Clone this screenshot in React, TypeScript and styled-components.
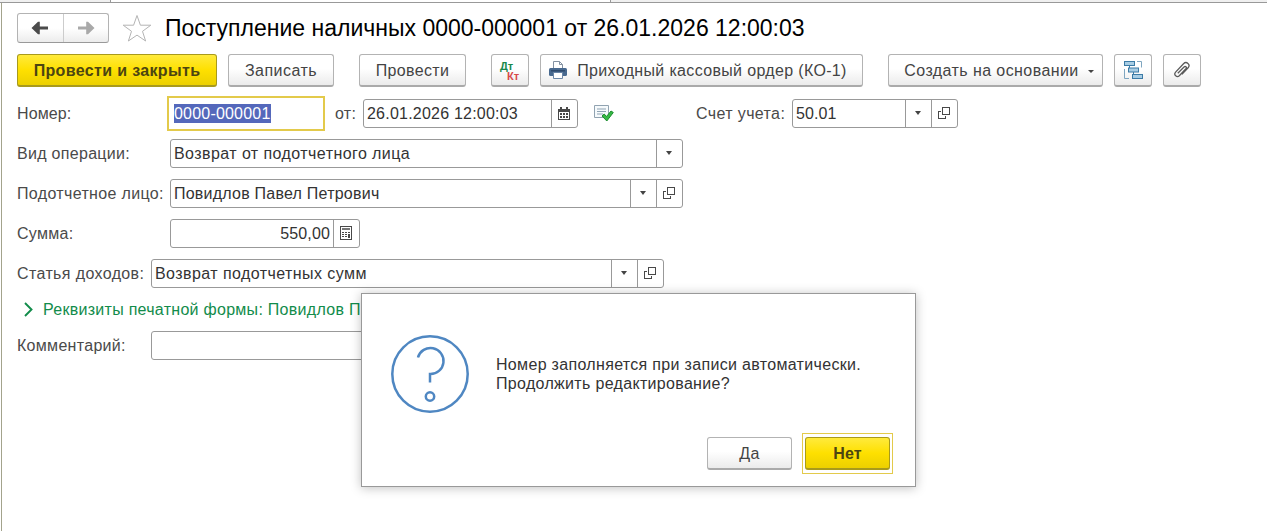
import React from 'react';
import styled, { createGlobalStyle, css } from 'styled-components';

export default function App() {
  return (
    <>
      <GlobalStyle />
      <TabStrip>
        <TabRest $width={110} />
        <ActiveTab />
        <TabRest />
      </TabStrip>
      <Page>
        <Header>
          <NavGroup>
            <NavButton>
              <ArrowIcon color="#4b4b4b" />
            </NavButton>
            <NavButton>
              <ArrowIcon color="#a9a9a9" flip />
            </NavButton>
          </NavGroup>
          <StarIcon />
          <Title>Поступление наличных 0000-000001 от 26.01.2026 12:00:03</Title>
        </Header>

        <Toolbar>
          <Button $width={200} $primary $spacing={0.35}>Провести и закрыть</Button>
          <Button $width={106} $ml={11} $spacing={0.45}>Записать</Button>
          <Button $width={107} $ml={25} $spacing={0.35}>Провести</Button>
          <Button $width={38} $ml={25}>
            <Posting>
              <Debit>Дт</Debit>
              <Credit>Кт</Credit>
            </Posting>
          </Button>
          <Button $width={323} $ml={11} $spacing={0.34}>
            <PrinterIcon />
            Приходный кассовый ордер (КО-1)
          </Button>
          <Button $width={215} $ml={25} $spacing={0.42}>
            Создать на основании
            <SmallCaret />
          </Button>
          <Button $width={38} $ml={11}>
            <StructureIcon />
          </Button>
          <Button $width={38} $ml={11}>
            <ClipIcon />
          </Button>
        </Toolbar>

        <Form>
          <Row>
            <Label $width={150} $spacing={0.1}>Номер:</Label>
            <FocusedField>
              <Selection>0000-000001</Selection>
            </FocusedField>
            <Label $width={28} $ml={10}>от:</Label>
            <Field $width={215}>
              <Value $spacing={0.22}>26.01.2026 12:00:03</Value>
              <FieldButton>
                <CalendarIcon />
              </FieldButton>
            </Field>
            <PostedMark>
              <PostedIcon />
            </PostedMark>
            <Label $width={96} $spacing={0.38}>Счет учета:</Label>
            <Field $width={166}>
              <Value $spacing={0.1}>50.01</Value>
              <FieldButton>
                <Caret />
              </FieldButton>
              <FieldButton>
                <OpenIcon />
              </FieldButton>
            </Field>
          </Row>
          <Row>
            <Label $width={153}>Вид операции:</Label>
            <Field $width={513}>
              <Value $spacing={0.43}>Возврат от подотчетного лица</Value>
              <FieldButton>
                <Caret />
              </FieldButton>
            </Field>
          </Row>
          <Row>
            <Label $width={153} $spacing={0.35}>Подотчетное лицо:</Label>
            <Field $width={513}>
              <Value $spacing={0.23}>Повидлов Павел Петрович</Value>
              <FieldButton>
                <Caret />
              </FieldButton>
              <FieldButton>
                <OpenIcon />
              </FieldButton>
            </Field>
          </Row>
          <Row>
            <Label $width={153}>Сумма:</Label>
            <Field $width={190}>
              <Value $right $spacing={0.15}>550,00</Value>
              <FieldButton>
                <CalculatorIcon />
              </FieldButton>
            </Field>
          </Row>
          <Row>
            <Label $width={134} $spacing={0.38}>Статья доходов:</Label>
            <Field $width={513}>
              <Value $spacing={0.43}>Возврат подотчетных сумм</Value>
              <FieldButton>
                <Caret />
              </FieldButton>
              <FieldButton>
                <OpenIcon />
              </FieldButton>
            </Field>
          </Row>
          <DetailsLink>
            <ChevronIcon />
            Реквизиты печатной формы: Повидлов П
          </DetailsLink>
          <Row>
            <Label $width={134}>Комментарий:</Label>
            <Field $width={513} />
          </Row>
        </Form>
      </Page>

      <Dialog>
        <Message>
          <QuestionIcon />
          <MessageText>
            Номер заполняется при записи автоматически.
            <br />
            Продолжить редактирование?
          </MessageText>
        </Message>
        <Actions>
          <Button $width={85} $spacing={0.3}>Да</Button>
          <FocusRing>
            <Button $width={85} $primary $spacing={0.2}>Нет</Button>
          </FocusRing>
        </Actions>
      </Dialog>
    </>
  );
}

const ArrowIcon = ({ color, flip = false }: { color: string; flip?: boolean }) => (
  <svg width="18" height="14" viewBox="0 0 18 14" transform={flip ? 'scale(-1 1)' : undefined}>
    <path d="M.5 7 7 .8h1.800v4.700H17v3H8.800v4.700H7Z" fill={color} />
  </svg>
);

const StarIcon = () => (
  <Star width="30" height="29" viewBox="0 0 30 29">
    <path
      d="M15 1.500 18.400 11.200H28.800L20.500 17.300 23.600 27 15 21.100 6.400 27 9.500 17.300 1.200 11.200H11.600Z"
      fill="#fff"
      stroke="#b4b4b4"
    />
  </Star>
);

const PrinterIcon = () => (
  <Printer width="18" height="19" viewBox="0 0 18 19">
    <path d="M4.500 8V.5h6l3 3V8" fill="#fff" stroke="#8492a3" />
    <path d="M10.500.5v3h3" fill="none" stroke="#8492a3" />
    <rect x="0" y="7" width="18" height="8" rx="1.500" fill="#48698f" />
    <rect x="2" y="9" width="14" height="1.500" fill="#2f4b6e" />
    <path d="M4.500 11.500h9v6h-9z" fill="#fff" stroke="#6b86a6" />
  </Printer>
);

const StructureIcon = () => (
  <svg width="19" height="19" viewBox="0 0 19 19">
    <path d="M13 .5h4.500v6M.5 8v9.500H5" fill="none" stroke="#7fa6c0" />
    <path d="M5.500 4v5h3M9.500 10v6" fill="none" stroke="#3c7ba6" />
    <g fill="#a8cde4" stroke="#3c7ba6">
      <rect x=".5" y=".5" width="10" height="4" />
      <rect x="4.500" y="7" width="10" height="4" />
      <rect x="8.500" y="13.500" width="10" height="4" />
    </g>
  </svg>
);

const ClipIcon = () => (
  <svg width="18" height="18" viewBox="0 0 18 18">
    <path
      d="M5.300 12.600 11.500 6.300c1.400-1.300 3.200.3 1.900 1.800l-6.600 6.900c-2.300 2.200-6.100-.8-3.700-3.600L11 3c2.900-2.800 7.400.6 4.600 4.100l-6.200 6.600"
      transform="translate(-.5 -.3)"
      fill="none"
      stroke="#5a5a5a"
      strokeWidth="1.300"
    />
  </svg>
);

const CalendarIcon = () => (
  <svg width="12" height="13" viewBox="0 0 12 13" shapeRendering="crispEdges">
    <path d="M0 2h12v11H0z" fill="#484848" />
    <path d="M2 0h2v3H2zM8 0h2v3H8z" fill="#484848" />
    <path d="M1 5h10v7H1z" fill="#fff" />
    <path d="M2 6h2v2H2zM5 6h2v2H5zM8 6h2v2H8zM2 9h2v2H2zM5 9h2v2H5zM8 9h2v2H8z" fill="#484848" />
  </svg>
);

const CalculatorIcon = () => (
  <svg width="12" height="14" viewBox="0 0 12 14" shapeRendering="crispEdges">
    <path d="M.5.5h11v13H.5z" fill="#fff" stroke="#484848" />
    <path d="M2 2h8v2H2z" fill="#777" />
    <path d="M2 6h2v1H2zM5 6h2v1H5zM8 6h2v1H8zM2 8h2v1H2zM5 8h2v1H5zM2 10h2v1H2zM5 10h2v1H5zM8 8h2v4H8z" fill="#484848" />
  </svg>
);

const OpenIcon = () => (
  <svg width="12" height="12" viewBox="0 0 12 12" shapeRendering="crispEdges">
    <path d="M4.500.5h7v7h-7zM3 4.500H.5v7h7V9" fill="none" stroke="#484848" />
  </svg>
);

const PostedIcon = () => (
  <svg width="20" height="17" viewBox="0 0 20 17">
    <path d="M.5.5h14v12H.5z" fill="#f6fafc" stroke="#91a3b1" />
    <path d="M3 4h9M3 6.500h9M3 9h6" stroke="#8fa3b3" />
    <path d="m8 11 2.200-2 2.300 2.500L17 6l2.300 1.500-6.500 8.500Z" fill="#35b944" stroke="#1d8c2f" />
  </svg>
);

const ChevronIcon = () => (
  <svg width="9" height="15" viewBox="0 0 9 15">
    <path d="m1 1 6.500 6.500L1 14" fill="none" stroke="#128c4b" strokeWidth="1.900" />
  </svg>
);

const QuestionIcon = () => (
  <svg width="78" height="78" viewBox="0 0 78 78" fill="none" stroke="#4f87c2" strokeWidth="2.500">
    <circle cx="39" cy="39" r="37.700" />
    <path d="M27 22.500A13 13 0 1 1 39 39v8.500" />
    <circle cx="39" cy="61.500" r="4.200" />
  </svg>
);

const GlobalStyle = createGlobalStyle`
  body {
    margin: 0;
    background: #fff;
    color: #333;
    font: 16px/19px 'Liberation Sans', Arial, sans-serif;
    overflow: hidden;
  }

  * {
    box-sizing: border-box;
  }
`;

const TabStrip = styled.div`
  display: flex;
  height: 3px;
  border-bottom: 1px solid #999;
`;

const TabRest = styled.div<{ $width?: number }>`
  ${(p) => (p.$width ? `width: ${p.$width}px;` : 'flex: 1;')}
  background: #f0f0f0;
`;

const ActiveTab = styled.div`
  width: 501px;
  border: solid #999;
  border-width: 0 1px;
`;

const Page = styled.main`
  height: 528px;
  margin-left: 1px;
  padding: 10px 0 0 15px;
  border-left: 1px solid #a3a38c;
`;

const Header = styled.header`
  display: flex;
  height: 31px;
`;

const NavGroup = styled.div`
  display: flex;
  width: 92px;
  height: 30px;
  border: 1px solid #b3b3b3;
  border-bottom-color: #999;
  border-radius: 3px;
  background: linear-gradient(#fff 50%, #ececec);
`;

const NavButton = styled.div`
  flex: 1;
  display: flex;
  align-items: center;
  justify-content: center;

  & + & {
    border-left: 1px solid #ccc;
  }
`;

const Star = styled.svg`
  margin: 1px 0 0 13px;
`;

const Title = styled.h1`
  margin: 0 0 0 13px;
  color: #000;
  font-size: 23px;
  line-height: 30px;
  font-weight: 400;
  white-space: nowrap;
`;

const Toolbar = styled.div`
  display: flex;
  margin-top: 10px;
`;

const Button = styled.div<{ $width: number; $ml?: number; $primary?: boolean; $spacing?: number }>`
  display: flex;
  flex: none;
  align-items: center;
  justify-content: center;
  width: ${(p) => p.$width}px;
  height: 33px;
  margin-left: ${(p) => p.$ml || 0}px;
  border: 1px solid #b3b3b3;
  border-bottom: 2px solid #aaa;
  border-radius: 3px;
  background: linear-gradient(#fff 45%, #ebebeb);
  color: #444;
  letter-spacing: ${(p) => p.$spacing || 0}px;
  white-space: nowrap;

  ${(p) =>
    p.$primary &&
    css`
      border-color: #a89a1c;
      background: linear-gradient(#ffea3c, #fee000 50%, #ecd000);
      color: #4b4512;
      font-weight: 700;
    `}
`;

const Posting = styled.div`
  display: flex;
  flex-direction: column;
  width: 20px;
  margin-top: 2px;
  font: 700 11px/10px 'Liberation Sans', Arial, sans-serif;
`;

const Debit = styled.span`
  color: #18884b;
`;

const Credit = styled.span`
  padding-left: 7px;
  color: #d84a4a;
`;

const Printer = styled.svg`
  margin: 0 10px 0 -7px;
`;

const Caret = styled.i`
  border: solid transparent;
  border-width: 4px 3.5px 0;
  border-top-color: #444;
`;

const SmallCaret = styled(Caret)`
  margin: 2px -7px 0 9px;
  border-width: 3px 3px 0;
`;

const Form = styled.div`
  margin-top: 12px;
`;

const Row = styled.div`
  display: flex;
  align-items: center;
  height: 29px;
  margin-bottom: 11px;
`;

const Label = styled.span<{ $width: number; $ml?: number; $spacing?: number }>`
  flex: none;
  width: ${(p) => p.$width}px;
  margin-left: ${(p) => p.$ml || 0}px;
  color: #4a4a4a;
  letter-spacing: ${(p) => p.$spacing ?? 0.3}px;
  white-space: nowrap;
`;

const Field = styled.div<{ $width: number }>`
  display: flex;
  flex: none;
  width: ${(p) => p.$width}px;
  height: 29px;
  border: 1px solid #999;
  border-radius: 3px;
  background: #fff;
`;

const FocusedField = styled.div`
  display: flex;
  align-items: center;
  width: 158px;
  height: 35px;
  padding-left: 5px;
  border: 2px solid #e3ca4b;
`;

const Selection = styled.span`
  background: #5468bb;
  color: #fff;
  letter-spacing: 0.2px;
`;

const Value = styled.span<{ $right?: boolean; $spacing?: number }>`
  flex: 1;
  padding: 0 3px;
  letter-spacing: ${(p) => p.$spacing || 0}px;
  line-height: 27px;
  text-align: ${(p) => (p.$right ? 'right' : 'left')};
  white-space: nowrap;
`;

const FieldButton = styled.div`
  display: flex;
  align-items: center;
  justify-content: center;
  width: 26px;
  padding: 0 2px 1px 0;
  border-left: 1px solid #999;
`;

const PostedMark = styled.div`
  display: flex;
  width: 118px;
  padding-left: 16px;
`;

const DetailsLink = styled.div`
  display: flex;
  align-items: center;
  gap: 10px;
  height: 21px;
  margin-bottom: 11px;
  padding-left: 7px;
  color: #128c4b;
  letter-spacing: 0.28px;
  white-space: nowrap;
`;

/* modal window above the form */
const Dialog = styled.div`
  position: absolute;
  left: 361px;
  top: 293px;
  width: 555px;
  height: 194px;
  padding: 41px 22px 0 29px;
  border: 1px solid #999;
  background: #fff;
  box-shadow: 0 1px 10px rgba(0, 0, 0, 0.25);
`;

const Message = styled.div`
  display: flex;
  align-items: center;
  gap: 27px;
`;

const MessageText = styled.p`
  margin: 0;
  letter-spacing: 0.32px;
  white-space: nowrap;
`;

const Actions = styled.div`
  display: flex;
  align-items: center;
  justify-content: flex-end;
  gap: 10px;
  margin-top: 20px;
`;

const FocusRing = styled.div`
  padding: 3px 2px;
  border: 1px solid #e3ca4b;
`;
